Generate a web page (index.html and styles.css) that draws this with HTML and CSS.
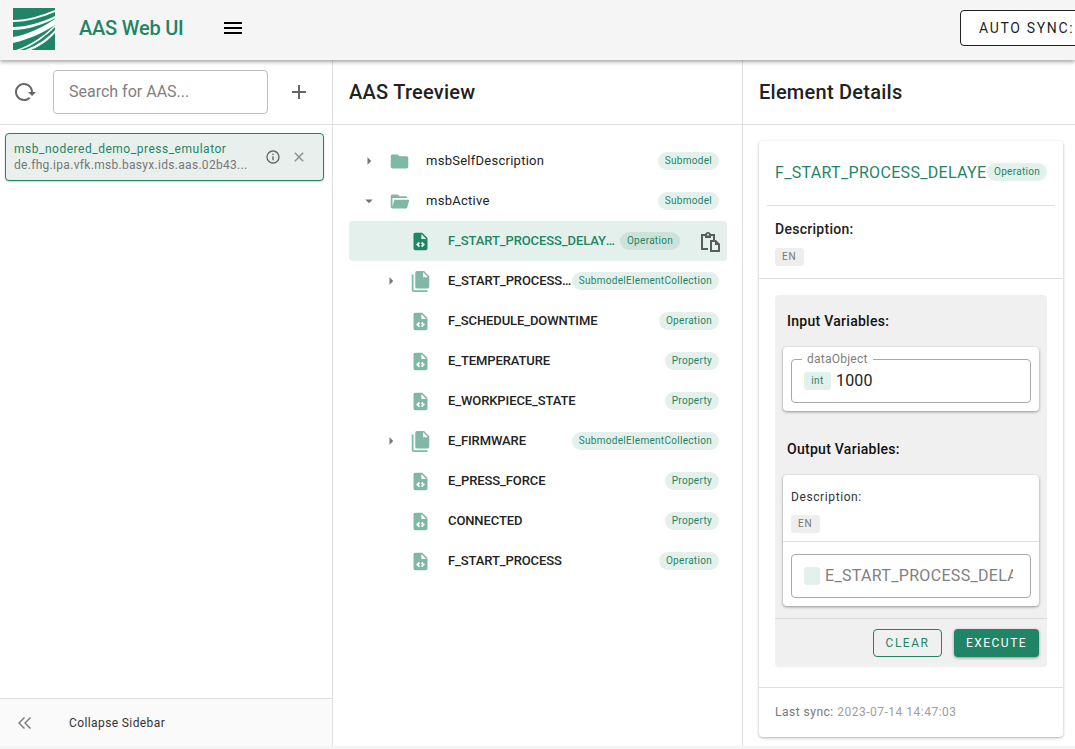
FILE: index.html
```html
<!DOCTYPE html>
<html lang="en">
<head>
  <meta charset="UTF-8" />
  <title>AAS Web UI</title>
  <link rel="stylesheet" href="styles.css">
</head>
<body>

<svg class="defs" width="0" height="0">
  <symbol id="i-file-code" viewBox="0 0 24 24">
    <path fill-rule="evenodd" d="M6 2C4.89 2 4 2.89 4 4V20A2 2 0 0 0 6 22H18A2 2 0 0 0 20 20V8L14 2H6ZM13 3.5L18.5 9H13V3.5ZM10 12.4L11.5 13.9L9.9 15.5L11.5 17.1L10 18.6L6.9 15.5L10 12.4ZM14 12.4L17.1 15.5L14 18.6L12.5 17.1L14.1 15.5L12.5 13.9L14 12.4Z"/>
  </symbol>
  <symbol id="i-file-multi" viewBox="0 0 24 24">
    <path d="M15 7H20.5L15 1.5V7M8 0H16L22 6V18A2 2 0 0 1 20 20H8C6.89 20 6 19.1 6 18V2A2 2 0 0 1 8 0M4 4V22H20V24H4A2 2 0 0 1 2 22V4H4Z"/>
  </symbol>
  <symbol id="i-right" viewBox="0 0 24 24"><path d="M10 17L15 12L10 7V17Z"/></symbol>
  <symbol id="i-down" viewBox="0 0 24 24"><path d="M7 10L12 15L17 10H7Z"/></symbol>
</svg>

<header class="app-bar">
  <svg class="logo" viewBox="0 0 42 42">
    <rect width="42" height="42" fill="#1f8566"/>
    <path fill="#fff" d="M0 12C14 12 30 7 42 2V4C30 9 14 14 0 14Z"/>
    <path fill="#fff" d="M0 19C14 19 30 14 42 8V10.5C30 16.5 14 22 0 22Z"/>
    <path fill="#fff" d="M0 29C14 27 30 19 42 11V17C30 25 14 32 0 35Z"/>
    <path fill="#fff" d="M3 42C18 37 32 27 42 17V19C32 29 20 38 7 42Z"/>
    <path fill="#fff" d="M12 42C25 37 35 30 42 22V25C36 32 27 38 18 42Z"/>
  </svg>
  <span class="app-title">AAS Web UI</span>
  <svg class="menu-icon" viewBox="0 0 24 24"><path d="M3 6H21V8H3V6M3 11H21V13H3V11M3 16H21V18H3V16Z"/></svg>
  <button class="sync-btn">AUTO SYNC:</button>
</header>

<main class="columns">
  <aside class="sidebar">
    <div class="search-row">
      <svg class="tool-icon" viewBox="0 0 24 24"><path d="M2 12C2 16.97 6.03 21 11 21C13.39 21 15.68 20.06 17.4 18.4L15.9 16.9C14.63 18.25 12.86 19 11 19C4.76 19 1.64 11.46 6.05 7.05C10.46 2.64 18 5.77 18 12H15L19 16H19.1L23 12H20C20 7.03 15.97 3 11 3C6.03 3 2 7.03 2 12Z"/></svg>
      <div class="search-box">Search for AAS...</div>
      <svg class="tool-icon" viewBox="0 0 24 24"><path d="M19 13H13V19H11V13H5V11H11V5H13V11H19V13Z"/></svg>
    </div>
    <div class="aas-list">
      <div class="aas-card">
        <div class="aas-text">
          <div class="aas-name">msb_nodered_demo_press_emulator</div>
          <div class="aas-id">de.fhg.ipa.vfk.msb.basyx.ids.aas.02b43...</div>
        </div>
        <svg class="aas-icon" viewBox="0 0 24 24"><path d="M11 9H13V7H11M12 20C7.59 20 4 16.41 4 12C4 7.59 7.59 4 12 4C16.41 4 20 7.59 20 12C20 16.41 16.41 20 12 20M12 2A10 10 0 0 0 2 12A10 10 0 0 0 12 22A10 10 0 0 0 22 12A10 10 0 0 0 12 2M11 17H13V11H11V17Z"/></svg>
        <svg class="aas-icon close" viewBox="0 0 24 24"><path d="M19 6.41L17.59 5L12 10.59L6.41 5L5 6.41L10.59 12L5 17.59L6.41 19L12 13.41L17.59 19L19 17.59L13.41 12L19 6.41Z"/></svg>
      </div>
    </div>
    <div class="collapse-row">
      <svg class="collapse-icon" viewBox="0 0 24 24"><path d="M17.5 6.5L12 12L17.5 17.5M11.5 6.5L6 12L11.5 17.5"/></svg>
      <span>Collapse Sidebar</span>
    </div>
  </aside>

  <section class="tree-col">
    <h2 class="col-title">AAS Treeview</h2>
    <div class="tree">
      <div class="row lvl-0">
        <svg class="arrow"><use href="#i-right"/></svg>
        <svg class="node-icon" viewBox="0 0 24 24"><path d="M10 4H4C2.89 4 2 4.89 2 6V18A2 2 0 0 0 4 20H20A2 2 0 0 0 22 18V8C22 6.89 21.1 6 20 6H12L10 4Z"/></svg>
        <span class="label plain">msbSelfDescription</span>
        <span class="chip">Submodel</span>
      </div>
      <div class="row lvl-0">
        <svg class="arrow"><use href="#i-down"/></svg>
        <svg class="node-icon" viewBox="0 0 24 24"><path d="M19 20H4C2.89 20 2 19.1 2 18V6C2 4.89 2.89 4 4 4H10L12 6H19A2 2 0 0 1 21 8H4V18L6.14 10H23.21L20.93 18.5C20.7 19.37 19.92 20 19 20Z"/></svg>
        <span class="label plain">msbActive</span>
        <span class="chip">Submodel</span>
      </div>
      <div class="row lvl-1 active">
        <span class="arrow"></span>
        <svg class="node-icon"><use href="#i-file-code"/></svg>
        <span class="label">F_START_PROCESS_DELAYED</span>
        <span class="chip">Operation</span>
        <svg class="paste-icon" viewBox="0 0 24 24"><path d="M4 5H8.2C8.6 3.8 9.7 3 11 3S13.4 3.8 13.8 5H18V11H16V7H14V9H8V7H6V19H11V21H4V5ZM11 4.8A1 1 0 0 0 11 6.8A1 1 0 0 0 11 4.8ZM13 11H19L23 15V23H13V11ZM15 13V21H21V16H18V13H15Z"/></svg>
      </div>
      <div class="row lvl-1">
        <svg class="arrow"><use href="#i-right"/></svg>
        <svg class="node-icon"><use href="#i-file-multi"/></svg>
        <span class="label">E_START_PROCESS_DELAYED</span>
        <span class="chip">SubmodelElementCollection</span>
      </div>
      <div class="row lvl-1">
        <span class="arrow"></span>
        <svg class="node-icon"><use href="#i-file-code"/></svg>
        <span class="label">F_SCHEDULE_DOWNTIME</span>
        <span class="chip">Operation</span>
      </div>
      <div class="row lvl-1">
        <span class="arrow"></span>
        <svg class="node-icon"><use href="#i-file-code"/></svg>
        <span class="label">E_TEMPERATURE</span>
        <span class="chip">Property</span>
      </div>
      <div class="row lvl-1">
        <span class="arrow"></span>
        <svg class="node-icon"><use href="#i-file-code"/></svg>
        <span class="label">E_WORKPIECE_STATE</span>
        <span class="chip">Property</span>
      </div>
      <div class="row lvl-1">
        <svg class="arrow"><use href="#i-right"/></svg>
        <svg class="node-icon"><use href="#i-file-multi"/></svg>
        <span class="label">E_FIRMWARE</span>
        <span class="chip">SubmodelElementCollection</span>
      </div>
      <div class="row lvl-1">
        <span class="arrow"></span>
        <svg class="node-icon"><use href="#i-file-code"/></svg>
        <span class="label">E_PRESS_FORCE</span>
        <span class="chip">Property</span>
      </div>
      <div class="row lvl-1">
        <span class="arrow"></span>
        <svg class="node-icon"><use href="#i-file-code"/></svg>
        <span class="label">CONNECTED</span>
        <span class="chip">Property</span>
      </div>
      <div class="row lvl-1">
        <span class="arrow"></span>
        <svg class="node-icon"><use href="#i-file-code"/></svg>
        <span class="label">F_START_PROCESS</span>
        <span class="chip">Operation</span>
      </div>
    </div>
  </section>

  <section class="details-col">
    <h2 class="col-title">Element Details</h2>
    <div class="details-wrap">
      <div class="details-card">
        <div class="details-head">
          <span class="details-name">F_START_PROCESS_DELAYED</span>
          <span class="chip">Operation</span>
        </div>
        <div class="details-desc">
          <div class="desc-title">Description:</div>
          <span class="lang-chip">EN</span>
        </div>
        <div class="op-wrap">
          <div class="op-box">
            <div class="op-body">
              <div class="op-title">Input Variables:</div>
              <div class="var-card input-card">
                <div class="field">
                  <span class="field-label">dataObject</span>
                  <span class="type-chip">int</span>
                  <span class="field-value">1000</span>
                </div>
              </div>
              <div class="op-title output-title">Output Variables:</div>
              <div class="var-card">
                <div class="var-desc">
                  <div class="var-desc-title">Description:</div>
                  <span class="lang-chip">EN</span>
                </div>
                <div class="var-field-wrap">
                  <div class="field">
                    <span class="type-chip empty"></span>
                    <span class="field-value muted">E_START_PROCESS_DELAYED</span>
                  </div>
                </div>
              </div>
            </div>
            <div class="op-actions">
              <button class="btn btn-outline">CLEAR</button>
              <button class="btn btn-solid">EXECUTE</button>
            </div>
          </div>
        </div>
        <div class="details-foot">
          <span class="foot-key">Last sync:</span> <span class="foot-val">2023-07-14 14:47:03</span>
        </div>
      </div>
    </div>
  </section>
</main>

</body>
</html>
```

FILE: styles.css
```css
* {
  box-sizing: border-box;
}

html, body {
  height: 100%;
}

body {
  margin: 0;
  overflow: hidden;
  font-family: Roboto, sans-serif;
  background: #f5f5f5;
  color: #1f1f1f;
}

.defs {
  position: absolute;
}

/* top bar */
.app-bar {
  height: 60px;
  display: flex;
  align-items: center;
  padding: 0 0 4px 13px;
  background: #f5f5f5;
  box-shadow: 0 2px 4px rgba(0,0,0,0.35);
  position: relative;
  z-index: 2;
  overflow: hidden;
}

.logo {
  width: 42px;
  height: 42px;
  margin-top: 2px;
  flex: none;
}

.app-title {
  margin-left: 24px;
  font-size: 20px;
  font-weight: 500;
  letter-spacing: -0.2px;
  color: #1f8566;
  width: 120px;
  flex: none;
}

.menu-icon {
  width: 24px;
  height: 24px;
  margin-left: 22px;
  flex: none;
}

.sync-btn {
  margin-left: auto;
  margin-right: -30px;
  width: 145px;
  height: 36px;
  flex: none;
  padding: 0 0 0 18px;
  text-align: left;
  background: #fff;
  border: 1px solid #222;
  border-radius: 4px;
  font: 400 14px Roboto, sans-serif;
  letter-spacing: 0.12em;
  color: #1f1f1f;
}

/* three columns */
.columns {
  height: 686px;
  display: grid;
  grid-template-columns: 333px 410px 332px;
  background: #fff;
}

.sidebar {
  display: flex;
  flex-direction: column;
  border-right: 1px solid #e0e0e0;
}

.search-row {
  height: 65px;
  flex: none;
  display: flex;
  align-items: center;
  padding: 0 21px 0 13px;
  border-bottom: 1px solid #e0e0e0;
}

.tool-icon {
  width: 24px;
  height: 24px;
  fill: #666;
  flex: none;
}

.search-box {
  width: 215px;
  height: 44px;
  margin: 0 19px 0 16px;
  padding-left: 15px;
  line-height: 41px;
  border: 1px solid #bdbdbd;
  border-radius: 4px;
  font-size: 16px;
  color: #808080;
  flex: none;
}

.aas-list {
  flex: 1;
  padding: 8px 8px 0 5px;
}

.aas-card {
  height: 48px;
  display: flex;
  align-items: center;
  padding: 0 16px 0 8px;
  background: #e9efed;
  border: 1px solid #1f8566;
  border-radius: 4px;
  box-shadow: 0 1px 2px rgba(0,0,0,0.2);
}

.aas-text {
  flex: 1;
  min-width: 0;
}

.aas-name {
  font-size: 12px;
  line-height: 16px;
  letter-spacing: 0.043em;
  color: #1f8566;
  white-space: nowrap;
}

.aas-id {
  font-size: 12px;
  line-height: 16px;
  letter-spacing: 0.025em;
  color: #777;
  white-space: nowrap;
}

.aas-icon {
  width: 16px;
  height: 16px;
  fill: #5f5f5f;
  flex: none;
}

.aas-icon.close {
  margin-left: 10px;
  fill: #8a8a8a;
}

.collapse-row {
  height: 48px;
  flex: none;
  display: flex;
  align-items: center;
  padding-left: 13px;
  background: #fafafa;
  border-top: 1px solid #e0e0e0;
  font-size: 12px;
  letter-spacing: 0.033em;
  color: #333;
}

.collapse-icon {
  width: 24px;
  height: 24px;
  margin-right: 32px;
  fill: none;
  stroke: #777;
  stroke-width: 1.4;
}

.tree-col {
  border-right: 1px solid #e0e0e0;
}

.col-title {
  height: 65px;
  margin: 0;
  padding: 0 16px;
  line-height: 65px;
  font-size: 20px;
  font-weight: 500;
  letter-spacing: 0.0125em;
  color: #222;
  border-bottom: 1px solid #e0e0e0;
}

/* tree rows */
.tree {
  padding: 16px 15px 0 16px;
}

.row {
  height: 40px;
  display: flex;
  align-items: center;
  padding-right: 8px;
  border-radius: 4px;
  font-size: 13px;
}

.lvl-0 {
  padding-left: 8px;
}

.lvl-1 {
  padding-left: 30px;
}

.arrow {
  width: 24px;
  height: 24px;
  flex: none;
  fill: #757575;
  transform: scale(0.75);
}

.lvl-0 .arrow {
  margin-right: 8px;
}

.lvl-1 .arrow {
  margin-right: 7px;
}

.node-icon {
  width: 21px;
  height: 21px;
  flex: none;
  fill: #7fb8a6;
}

.label {
  margin-left: 17px;
  padding-bottom: 2px;
  flex: 1;
  min-width: 0;
  overflow: hidden;
  white-space: nowrap;
  text-overflow: ellipsis;
  font-weight: 500;
  letter-spacing: -0.1px;
  color: #222;
}

.label.plain {
  margin-left: 16px;
  font-weight: 400;
  letter-spacing: 0.02em;
}

.chip {
  flex: none;
  height: 18px;
  padding: 0 7px;
  line-height: 18px;
  border-radius: 9px;
  background: #e4f0ec;
  color: #1f8566;
  font-size: 10px;
  letter-spacing: 0.3px;
  white-space: nowrap;
}

.row.active {
  background: #e4f0ec;
}

.row.active .node-icon {
  fill: #1f8566;
}

.row.active .label {
  color: #1f8566;
}

.row.active .chip {
  background: #cde2da;
}

.paste-icon {
  width: 24px;
  height: 24px;
  margin-left: 17px;
  margin-right: -2px;
  fill: #5c5c5c;
  flex: none;
}

/* details */
.details-wrap {
  padding: 16px 12px 0 16px;
}

.details-card {
  height: 596px;
  background: #fff;
  border-radius: 4px;
  box-shadow: 0 1px 3px rgba(0,0,0,0.3);
  display: flex;
  flex-direction: column;
}

.details-head {
  height: 65px;
  margin: 0 8px;
  padding: 0 8px 2px;
  display: flex;
  align-items: center;
  border-bottom: 1px solid #e0e0e0;
}

.details-name {
  width: 212px;
  overflow: hidden;
  white-space: nowrap;
  font-size: 16px;
  letter-spacing: 0.02em;
  color: #1f8566;
  flex: none;
}

.details-desc {
  height: 73px;
  padding: 15px 16px 0;
  border-bottom: 1px solid #e0e0e0;
}

.desc-title {
  font-size: 14px;
  font-weight: 500;
  line-height: 17px;
  letter-spacing: 0.02em;
  color: #222;
}

.lang-chip {
  display: inline-block;
  height: 18px;
  margin-top: 10px;
  padding: 0 7px;
  line-height: 18px;
  background: #eee;
  border-radius: 3px;
  font-size: 10px;
  letter-spacing: 0.09em;
  color: #777;
}

.op-wrap {
  padding: 16px 16px 0;
}

.op-box {
  height: 372px;
  background: #f0f0f0;
  border-radius: 4px;
  display: flex;
  flex-direction: column;
}

.op-body {
  flex: 1;
  padding: 18px 8px 0;
}

.op-title {
  padding-left: 4px;
  font-size: 14px;
  font-weight: 500;
  line-height: 17px;
  letter-spacing: 0.02em;
  color: #111;
}

.output-title {
  margin-top: 30px;
}

.var-card {
  margin-top: 17px;
  background: #fff;
  border-radius: 4px;
  box-shadow: 0 1px 3px rgba(0,0,0,0.4);
}

.input-card {
  height: 64px;
  margin-top: 17px;
  padding: 12px 8px;
}

.field {
  position: relative;
  height: 44px;
  display: flex;
  align-items: center;
  padding-left: 12px;
  border: 1px solid #a8a8a8;
  border-radius: 4px;
}

.field-label {
  position: absolute;
  left: 10px;
  top: -8px;
  padding: 0 5px;
  background: #fff;
  font-size: 12px;
  line-height: 14px;
  letter-spacing: 0.02em;
  color: #808080;
}

.type-chip {
  width: 27px;
  height: 18px;
  line-height: 18px;
  text-align: center;
  background: #e4f0ec;
  border-radius: 3px;
  font-size: 10px;
  letter-spacing: 0.05em;
  color: #1f8566;
  flex: none;
}

.type-chip.empty {
  width: 16px;
}

.field-value {
  margin-left: 5px;
  padding-bottom: 2px;
  font-size: 16px;
  letter-spacing: 0.01em;
  color: #222;
  white-space: nowrap;
  overflow: hidden;
  width: 188px;
}

.field-value.muted {
  letter-spacing: 0.02em;
  color: #808080;
}

.var-desc {
  height: 67px;
  padding: 15px 8px 0;
  border-bottom: 1px solid #e0e0e0;
}

.var-desc-title {
  font-size: 12px;
  line-height: 15px;
  letter-spacing: 0.05em;
  color: #333;
}

.var-field-wrap {
  padding: 12px 8px 8px;
}

.op-actions {
  height: 49px;
  flex: none;
  display: flex;
  justify-content: flex-end;
  align-items: flex-start;
  gap: 12px;
  padding: 10px 8px 0;
  border-top: 1px solid #dcdcdc;
}

.btn {
  height: 28px;
  padding: 0;
  border-radius: 4px;
  font: 400 12px Roboto, sans-serif;
  letter-spacing: 0.125em;
}

.btn-outline {
  width: 69px;
  background: transparent;
  border: 1px solid #1f8566;
  color: #1f8566;
}

.btn-solid {
  width: 85px;
  background: #1f8566;
  border: none;
  color: #fff;
  box-shadow: 0 1px 3px rgba(0,0,0,0.4);
}

.details-foot {
  margin-top: 20px;
  height: 49px;
  padding-left: 16px;
  line-height: 48px;
  border-top: 1px solid #e0e0e0;
  font-size: 12px;
  letter-spacing: 0.5px;
}

.foot-key {
  color: #777;
}

.foot-val {
  color: #9e9e9e;
}
```
